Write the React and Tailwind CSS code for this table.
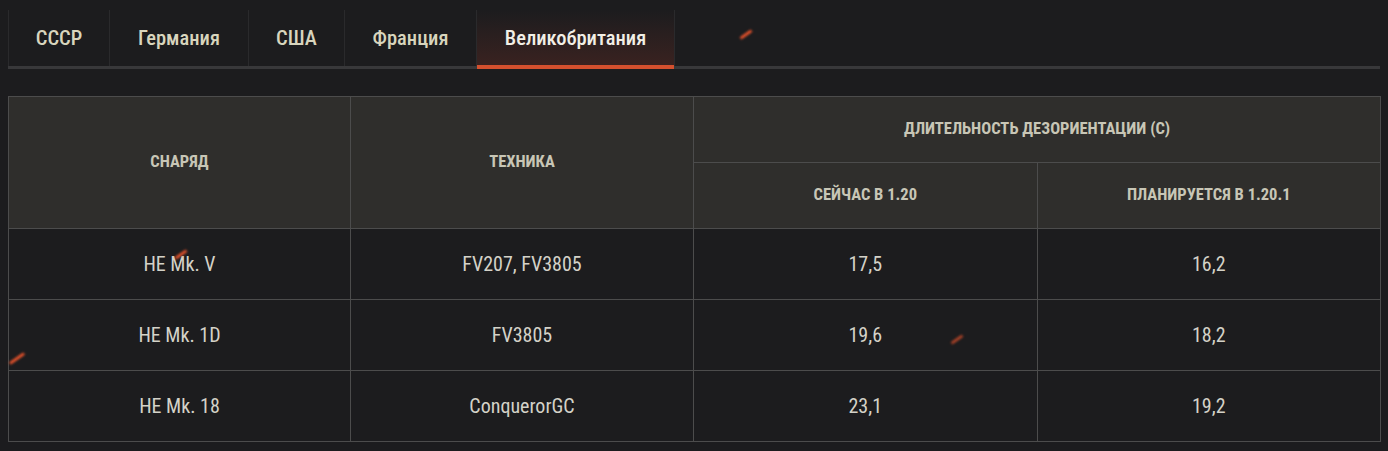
const font = "font-['Roboto_Condensed',Roboto,'Liberation_Sans',sans-serif]";

const tabs = [
  { label: 'СССР', w: 'w-[101px]' },
  { label: 'Германия', w: 'w-[139px]' },
  { label: 'США', w: 'w-[96px]' },
  { label: 'Франция', w: 'w-[132px]' },
  { label: 'Великобритания', w: 'w-[199px]', active: true },
];

const rows = [
  ['HE Mk. V', 'FV207, FV3805', '17,5', '16,2'],
  ['HE Mk. 1D', 'FV3805', '19,6', '18,2'],
  ['HE Mk. 18', 'ConquerorGC', '23,1', '19,2'],
];

// little embers floating over the page
function Spark({ className }) {
  return (
    <div
      className={`pointer-events-none absolute h-[3px] w-[14px] -rotate-[35deg] rounded-full bg-[#e0502a] blur-[1px] ${className}`}
    />
  );
}

export default function App() {
  return (
    <div className={`relative h-[451px] w-[1388px] overflow-hidden bg-[#1c1c1e] px-2 pt-[10px] ${font}`}>
      {/* tabs */}
      <div className="flex h-[59px] border-b-[3px] border-[#38383a]">
        {tabs.map((t, i) => (
          <div
            key={i}
            className={`relative flex ${t.w} items-center justify-center border-l border-[#2a2a2c] text-[20.5px] font-medium ${
              t.active
                ? 'bg-gradient-to-b from-[#1c1c1e] to-[#3a2220] text-[#f2efe6]'
                : 'text-[#d8d5bd]'
            } ${i === tabs.length - 1 ? 'border-r' : ''}`}
          >
            {t.label}
            {t.active && <div className="absolute -bottom-[3px] left-0 right-0 h-[4px] bg-[#d4502e]" />}
          </div>
        ))}
      </div>

      {/* table */}
      <table className="mt-[27px] w-[1373px] table-fixed border-collapse border border-[#4c4c4c] text-center">
        <thead className="bg-[#2f2e2c] text-[16.5px] font-bold uppercase text-[#c8c6b6]">
          <tr className="h-[66px]">
            <th rowSpan={2} className="w-[342px] border border-[#4c4c4c] font-bold">Снаряд</th>
            <th rowSpan={2} className="w-[343px] border border-[#4c4c4c] font-bold">Техника</th>
            <th colSpan={2} className="border border-[#4c4c4c] font-bold">Длительность дезориентации (с)</th>
          </tr>
          <tr className="h-[66px]">
            <th className="w-[344px] border border-[#4c4c4c] font-bold">Сейчас в 1.20</th>
            <th className="border border-[#4c4c4c] font-bold">Планируется в 1.20.1</th>
          </tr>
        </thead>
        <tbody className="text-[20px] text-[#d4d2c8]">
          {rows.map((r, i) => (
            <tr key={i} className="h-[71px]">
              {r.map((c, j) => (
                <td key={j} className="border border-[#4c4c4c]">
                  {c}
                </td>
              ))}
            </tr>
          ))}
        </tbody>
      </table>

      <Spark className="left-[739px] top-[33px]" />
      <Spark className="left-[174px] top-[253px]" />
      <Spark className="left-[8px] top-[357px] w-[18px]" />
      <Spark className="left-[950px] top-[338px] w-[10px] opacity-70" />
    </div>
  );
}
